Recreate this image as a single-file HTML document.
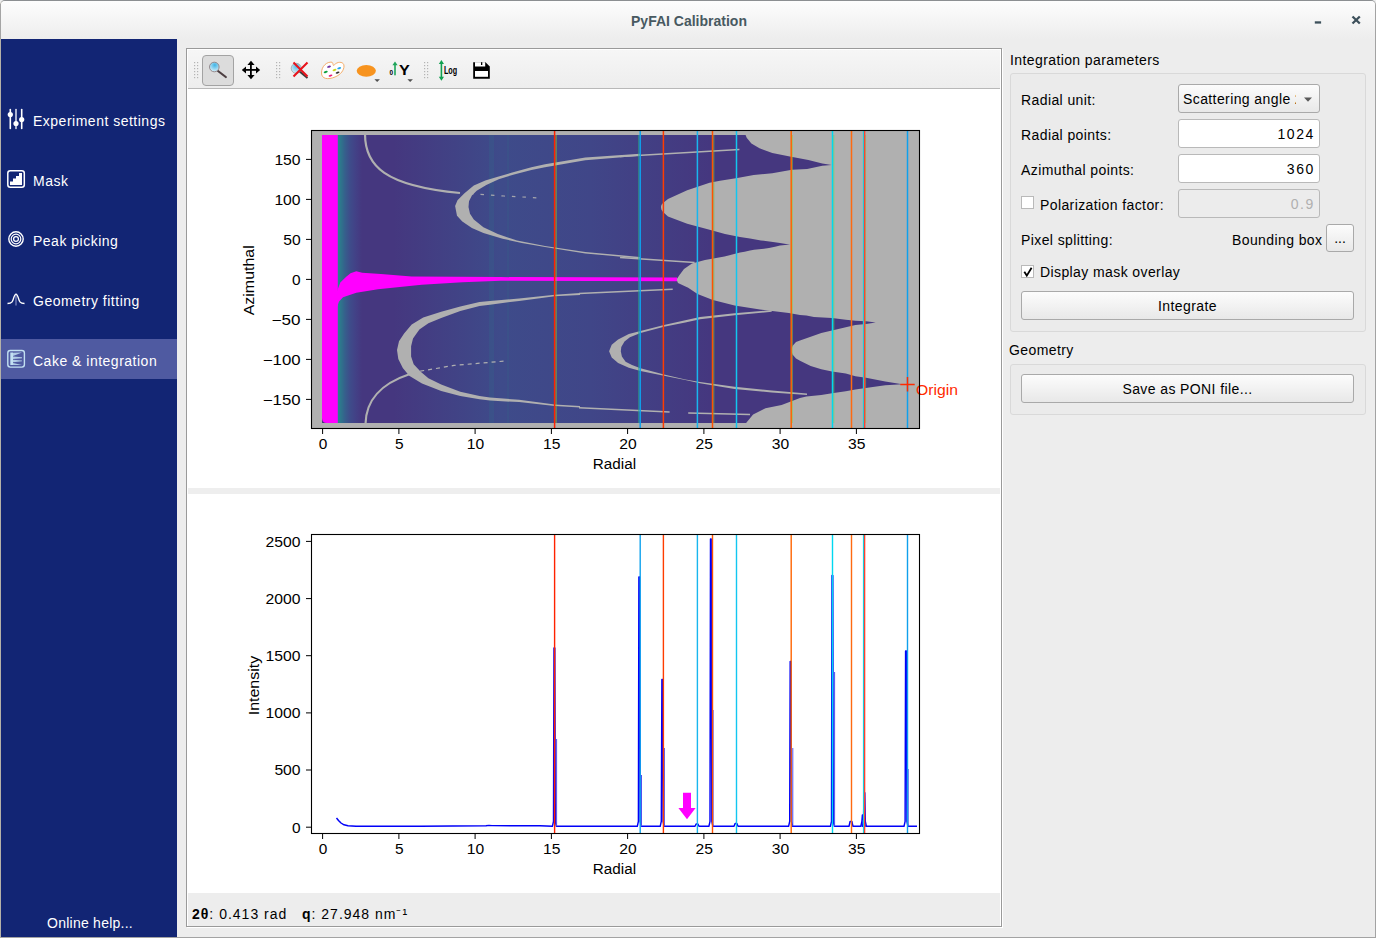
<!DOCTYPE html>
<html><head><meta charset="utf-8">
<style>
*{box-sizing:border-box}
html,body{margin:0;padding:0}
body{width:1376px;height:938px;overflow:hidden;position:relative;background:#ededed;font-family:"Liberation Sans",sans-serif;color:#000}
.abs{position:absolute}
#win{position:absolute;left:0;top:0;width:1376px;height:938px;border:1px solid #a3a3a3;border-top-color:#8c8f92;border-left-color:#b4b1a8;border-radius:5px 5px 0 0;background:#ededed}
#title{position:absolute;left:1px;top:1px;width:1374px;height:38px;background:linear-gradient(#fdfdfd,#ededed);border-radius:4px 4px 0 0}
#titletxt{position:absolute;left:0;width:1376px;top:12px;text-align:center;font-weight:bold;font-size:14px;color:#485961}
#side{position:absolute;left:1px;top:39px;width:176px;height:898px;background:#122574;color:#fff;font-size:14px}
.item{position:absolute;left:0;width:176px;height:40px}
.t{white-space:nowrap;letter-spacing:0.5px}
.item .t{position:absolute;left:34px;top:11px;white-space:nowrap}
.sel{background:#4f5aa1}
#frame{position:absolute;left:186px;top:48px;width:816px;height:879px;border:1px solid #9a9a9a;background:#fff;box-shadow:1px 1px 0 #fff}
#toolbar{position:absolute;left:188px;top:50px;width:812px;height:39px;background:linear-gradient(#f6f6f6,#ededed);border-bottom:1px solid #b8b8b8}
#split{position:absolute;left:188px;top:488px;width:812px;height:6px;background:#eeeeee}
#status{position:absolute;left:188px;top:893px;width:812px;height:33px;background:#ededed;font-size:14px}
.lbl{position:absolute;font-size:14px;white-space:nowrap;letter-spacing:0.4px}
.num{letter-spacing:1.6px}
.field{position:absolute;background:#fff;border:1px solid #b9b9b9;border-radius:3px}
.btn{position:absolute;letter-spacing:0.4px;background:linear-gradient(#fcfcfc,#e8e8e8);border:1px solid #a9a9a9;border-radius:3px;font-size:14px;text-align:center}
.grp{position:absolute;border:1px solid #d9d9d9;border-radius:3px;background:#ebebeb}
svg text{font-family:"Liberation Sans",sans-serif}
</style></head><body>
<div id="win"></div>
<div class="abs" style="left:0;top:4px;width:1px;height:35px;background:#a4a4a4;z-index:2"></div>
<div id="title"><div id="titletxt">PyFAI Calibration</div></div>
<svg class="abs" style="left:1300px;top:8px" width="70" height="24" viewBox="1300 8 70 24">
  <rect x="1314.8" y="21.3" width="6.3" height="2.3" fill="#3d505b"/>
  <path d="M1352.5,16.5 L1359.8,23.5 M1359.8,16.5 L1352.5,23.5" stroke="#3d505b" stroke-width="2.3"/>
</svg>

<div id="side">
  <div class="item sel" style="top:300px;height:40px"></div>
  <div class="t abs" style="left:32px;top:74px">Experiment settings</div>
  <div class="t abs" style="left:32px;top:134px">Mask</div>
  <div class="t abs" style="left:32px;top:194px">Peak picking</div>
  <div class="t abs" style="left:32px;top:254px">Geometry fitting</div>
  <div class="t abs" style="left:32px;top:314px">Cake &amp; integration</div>
  <div class="t abs" style="left:46px;top:876px;letter-spacing:0.25px">Online help...</div>
</div>
<svg class="abs" style="left:0;top:0" width="180" height="400" viewBox="0 0 180 400">
  <g stroke="#fff" stroke-width="1.6" stroke-linecap="round">
    <line x1="10.3" y1="109.5" x2="10.3" y2="128.5"/><line x1="16" y1="109.5" x2="16" y2="128.5" stroke="#d4d8ea"/><line x1="21.7" y1="109.5" x2="21.7" y2="128.5"/>
  </g>
  <g fill="#fff"><circle cx="10.3" cy="114.6" r="2.6"/><circle cx="16" cy="123.5" r="2.6"/><circle cx="21.7" cy="119.6" r="2.6"/></g>
  <rect x="7.8" y="170.7" width="16.5" height="16.6" rx="2.5" fill="none" stroke="#fff" stroke-width="1.5"/>
  <path d="M10,185 V181.5 H13 V178.6 H16 V175.9 H19 V173 H22 V185 Z" fill="#fff"/>
  <g fill="none" stroke="#fff"><circle cx="16" cy="239" r="7.2" stroke-width="1.4"/><circle cx="16" cy="239" r="4.8" stroke-width="1.2"/><circle cx="16" cy="239" r="2.4" stroke-width="1.3"/></g>
  <line x1="16" y1="293" x2="16" y2="305.5" stroke="#7a84bd" stroke-width="1.3"/>
  <path d="M7.5,303.5 C12,303.5 12.5,302 14,297 C15,293.5 17,293.5 18,297 C19.5,302 20,303.5 24.5,303.5" fill="none" stroke="#fff" stroke-width="1.3"/>
  <rect x="7.8" y="350.5" width="16.6" height="16.6" rx="2.5" fill="none" stroke="#c2e0f2" stroke-width="1.4"/>
  <path d="M10.3,352.5 H13 V365 H10.3 Z" fill="#c2e0f2"/>
  <path d="M13,352.8 L22,352.5 L13,356 Z M13,356.5 L22,357.2 L22,358.2 L13,359 Z M13,359.8 L22,360.5 L22,361.3 L13,362.2 Z M13,363 L22,365 L13,365 Z" fill="#c2e0f2" opacity="0.85"/>
</svg>
<div id="frame"></div>
<div id="toolbar"></div>
<svg class="abs" style="left:186px;top:48px" width="320" height="42" viewBox="186 48 320 42">
  <g fill="#b4b4b4">
    <rect x="194" y="62" width="1.2" height="1.2"/><rect x="197" y="62" width="1.2" height="1.2"/><rect x="194" y="65" width="1.2" height="1.2"/><rect x="197" y="65" width="1.2" height="1.2"/><rect x="194" y="68" width="1.2" height="1.2"/><rect x="197" y="68" width="1.2" height="1.2"/><rect x="194" y="71" width="1.2" height="1.2"/><rect x="197" y="71" width="1.2" height="1.2"/><rect x="194" y="74" width="1.2" height="1.2"/><rect x="197" y="74" width="1.2" height="1.2"/><rect x="194" y="77" width="1.2" height="1.2"/><rect x="197" y="77" width="1.2" height="1.2"/>
    <rect x="276" y="62" width="1.2" height="1.2"/><rect x="279" y="62" width="1.2" height="1.2"/><rect x="276" y="65" width="1.2" height="1.2"/><rect x="279" y="65" width="1.2" height="1.2"/><rect x="276" y="68" width="1.2" height="1.2"/><rect x="279" y="68" width="1.2" height="1.2"/><rect x="276" y="71" width="1.2" height="1.2"/><rect x="279" y="71" width="1.2" height="1.2"/><rect x="276" y="74" width="1.2" height="1.2"/><rect x="279" y="74" width="1.2" height="1.2"/><rect x="276" y="77" width="1.2" height="1.2"/><rect x="279" y="77" width="1.2" height="1.2"/>
    <rect x="424" y="62" width="1.2" height="1.2"/><rect x="427" y="62" width="1.2" height="1.2"/><rect x="424" y="65" width="1.2" height="1.2"/><rect x="427" y="65" width="1.2" height="1.2"/><rect x="424" y="68" width="1.2" height="1.2"/><rect x="427" y="68" width="1.2" height="1.2"/><rect x="424" y="71" width="1.2" height="1.2"/><rect x="427" y="71" width="1.2" height="1.2"/><rect x="424" y="74" width="1.2" height="1.2"/><rect x="427" y="74" width="1.2" height="1.2"/><rect x="424" y="77" width="1.2" height="1.2"/><rect x="427" y="77" width="1.2" height="1.2"/>
  </g>
  <defs><radialGradient id="lens" cx="0.55" cy="0.3" r="0.8"><stop offset="0" stop-color="#3fb4e6"/><stop offset="1" stop-color="#eef8fc"/></radialGradient></defs>
  <rect x="202.5" y="55.5" width="31" height="30" rx="3.5" fill="#dcdcdc" stroke="#a3a3a3"/>
  <line x1="218" y1="71" x2="225.8" y2="77" stroke="#4d3f42" stroke-width="2.2" stroke-linecap="round"/>
  <circle cx="214.3" cy="67" r="4.8" fill="url(#lens)" stroke="#8d7f82" stroke-width="0.9"/>
  <g fill="#000"><rect x="250" y="63" width="1.8" height="14"/><rect x="244" y="69" width="14" height="1.8"/>
    <path d="M251,60.8 L254.6,65 H247.4 Z M251,79.2 L254.6,75 H247.4 Z M241.8,70 L246,66.4 V73.6 Z M260.2,70 L256,66.4 V73.6 Z"/></g>
  <line x1="299" y1="71" x2="307.5" y2="78" stroke="#3c3c3c" stroke-width="2"/>
  <circle cx="296.2" cy="68.3" r="5" fill="url(#lens)" stroke="#999" stroke-width="0.8" opacity="0.9"/>
  <path d="M293.5,62.5 L307.5,76.5 M307.5,62.5 L293.5,76.5" stroke="#e8141c" stroke-width="2.1"/>
  <path d="M332,62.2 C327,61.5 321.5,66 321.5,73 C321.5,79 328,80 335,77 C341,74.5 344,70 344,66 C344,62 339,61.2 335.5,63.8 C334.5,64.6 333.8,65.6 333.4,65.4 C333,64.5 332.8,62.5 332,62.2 Z" fill="#fff" stroke="#f3a55a" stroke-width="0.9"/>
  <g><ellipse cx="329" cy="66.7" rx="2" ry="1" fill="#7030a0" transform="rotate(-15 329 66.7)"/><ellipse cx="339.2" cy="68.2" rx="2" ry="1" fill="#20a8e8" transform="rotate(-15 339.2 68.2)"/><ellipse cx="334.5" cy="70" rx="2" ry="1" fill="#c8d820" transform="rotate(-15 334.5 70)"/><ellipse cx="325.7" cy="72" rx="2.1" ry="1" fill="#10a040" transform="rotate(-15 325.7 72)"/><ellipse cx="337.6" cy="72.6" rx="2" ry="1" fill="#303030" transform="rotate(-15 337.6 72.6)"/><ellipse cx="330.5" cy="75.6" rx="2" ry="1" fill="#e8187a" transform="rotate(-15 330.5 75.6)"/></g>
  <ellipse cx="366.3" cy="70.8" rx="9.6" ry="5.9" fill="#f7931e"/>
  <path d="M374.4,79.3 H379.9 L377.15,82 Z M407.4,79.3 H412.9 L410.15,82 Z" fill="#505050"/>
  <text x="389.6" y="75.3" font-size="6.5" font-weight="bold" fill="#000">0</text>
  <rect x="394.2" y="64.5" width="1.6" height="10.8" fill="#1fa55a"/><path d="M395,61.5 L397.6,65.2 H392.4 Z" fill="#1fa55a"/>
  <text x="398.9" y="75.4" font-size="15.2" font-weight="bold" fill="#000" textLength="10.8" lengthAdjust="spacingAndGlyphs">Y</text>
  <rect x="440.6" y="63" width="1.6" height="15" fill="#12a050"/><path d="M441.4,60 L444,64 H438.8 Z M441.4,80.8 L444,76.8 H438.8 Z" fill="#12a050"/>
  <text x="443.9" y="74.1" font-size="10.6" font-weight="bold" fill="#000" textLength="13.2" lengthAdjust="spacingAndGlyphs">Log</text>
  <path d="M473.2,62.2 H485.5 L489.8,66.5 V78.7 H473.2 Z" fill="#000"/>
  <rect x="475" y="71" width="13" height="5.8" fill="#fff"/>
  <rect x="475" y="62.2" width="10.2" height="4.3" fill="#fff"/><rect x="481" y="62.2" width="1.3" height="2.8" fill="#000"/>
</svg>
<div id="split"></div>
<div id="status"><div class="lbl" style="left:4px;top:11px;letter-spacing:1px"><b>2θ</b>: 0.413 rad&nbsp;&nbsp; <b>q</b>: 27.948 nm⁻¹</div></div>

<!-- right panel -->
<div class="lbl" style="left:1010px;top:52px">Integration parameters</div>
<div class="grp" style="left:1010px;top:73px;width:356px;height:259px"></div>
<div class="lbl" style="left:1021px;top:92px">Radial unit:</div>
<div class="btn" style="left:1178px;top:84px;width:142px;height:29px;text-align:left"><div class="lbl" style="left:4px;top:6px;width:113px;overflow:hidden">Scattering angle 2θ</div><svg class="abs" style="left:124px;top:12px" width="10" height="6"><path d="M1,0.5 H9 L5,4.8 Z" fill="#5a5a5a"/></svg></div>
<div class="lbl" style="left:1021px;top:127px">Radial points:</div>
<div class="field" style="left:1178px;top:119px;width:142px;height:29px"><div class="lbl num" style="right:4px;top:6px">1024</div></div>
<div class="lbl" style="left:1021px;top:162px">Azimuthal points:</div>
<div class="field" style="left:1178px;top:154px;width:142px;height:29px"><div class="lbl num" style="right:4px;top:6px">360</div></div>
<div class="field" style="left:1021px;top:196px;width:13px;height:13px;border-radius:0"></div>
<div class="lbl" style="left:1040px;top:197px">Polarization factor:</div>
<div class="field" style="left:1178px;top:189px;width:142px;height:29px;background:#ececec"><div class="lbl num" style="right:4px;top:6px;color:#b0b0b0">0.9</div></div>
<div class="lbl" style="left:1021px;top:232px">Pixel splitting:</div>
<div class="lbl" style="left:1232px;top:232px">Bounding box</div>
<div class="btn" style="left:1326px;top:224px;width:28px;height:28px;padding-top:5px;letter-spacing:0">...</div>
<div class="field" style="left:1021px;top:265px;width:13px;height:13px;border-radius:0"><svg class="abs" style="left:0;top:0" width="12" height="12"><path d="M2.3,5.8 L4.8,9.6 L9.6,1.8" fill="none" stroke="#000" stroke-width="1.8"/></svg></div>
<div class="lbl" style="left:1040px;top:264px">Display mask overlay</div>
<div class="btn" style="left:1021px;top:291px;width:333px;height:29px;padding-top:6px">Integrate</div>
<div class="lbl" style="left:1009px;top:342px">Geometry</div>
<div class="grp" style="left:1010px;top:364px;width:356px;height:51px"></div>
<div class="btn" style="left:1021px;top:374px;width:333px;height:29px;padding-top:6px">Save as PONI file...</div>

<svg class="abs" style="left:0;top:0" width="1376" height="938" viewBox="0 0 1376 938">
<defs><linearGradient id="teal" gradientUnits="userSpaceOnUse" x1="337" x2="362" y1="0" y2="0"><stop offset="0" stop-color="#21908c"/><stop offset="0.12" stop-color="#2c7a8c"/><stop offset="0.32" stop-color="#365f8c"/><stop offset="0.52" stop-color="#3e4c8a"/><stop offset="0.72" stop-color="#424287"/><stop offset="1" stop-color="#45377f"/></linearGradient><linearGradient id="blue" gradientUnits="userSpaceOnUse" x1="322" x2="919" y1="0" y2="0"><stop offset="0" stop-color="#45377f"/><stop offset="0.12" stop-color="#45377f"/><stop offset="0.3" stop-color="#3e4b8a"/><stop offset="0.45" stop-color="#404688"/><stop offset="0.65" stop-color="#45377f"/><stop offset="1" stop-color="#45377f"/></linearGradient><clipPath id="cakeclip"><rect x="312" y="131" width="607" height="297"/></clipPath></defs>
<rect x="311" y="130" width="609" height="299" fill="#b0b0b0"/>
<g clip-path="url(#cakeclip)">
<polygon points="322.0,135.0 745.6,135.0 746.7,137.8 751.4,143.6 759.5,148.3 772.3,152.9 789.8,156.4 808.4,159.9 822.3,163.4 831.6,165.1 822.3,165.8 807.2,169.0 792.0,169.8 772.3,173.3 753.7,175.0 737.4,177.9 720.0,180.8 709.6,182.8 687.2,190.2 668.0,199.1 663.0,203.0 661.4,205.0 661.0,207.0 661.4,209.5 663.0,212.0 668.0,216.6 687.2,223.8 709.6,229.8 725.0,234.0 740.0,236.9 750.0,238.4 761.0,240.4 773.0,241.9 780.0,243.0 786.0,243.9 790.0,244.5 780.0,245.6 775.0,246.8 769.0,248.0 764.0,248.8 754.0,249.7 750.0,250.6 744.6,251.7 740.0,252.6 724.5,256.5 705.0,260.0 692.0,263.5 684.0,269.0 679.5,275.0 676.5,279.5 678.0,283.0 688.2,287.7 697.5,293.9 712.9,300.1 734.6,305.5 760.0,309.4 788.8,313.0 800.0,314.9 806.4,315.5 813.9,317.1 832.0,318.1 845.8,319.7 855.4,320.8 866.1,321.3 875.7,322.4 866.1,324.0 855.4,325.0 845.8,327.2 832.0,330.4 821.3,333.0 810.7,336.8 800.0,340.5 796.0,342.0 792.5,346.0 791.3,350.4 792.5,354.5 796.0,358.5 800.0,360.8 810.7,366.1 821.3,369.3 832.0,371.4 845.8,373.6 855.4,376.2 866.1,377.8 885.3,381.6 902.3,384.2 885.3,385.3 869.3,387.4 855.4,389.6 845.8,391.2 832.0,393.3 821.3,394.9 806.4,396.5 800.0,398.1 781.6,405.1 765.5,408.3 753.1,414.5 746.1,423.0 322.0,423.0" fill="url(#blue)" />
<rect x="337" y="135" width="25" height="288" fill="url(#teal)"/>
<rect x="489" y="135" width="5" height="288" fill="#2a8a8e" opacity="0.13"/>
<rect x="507" y="135" width="2" height="288" fill="#2a8a8e" opacity="0.1"/>
<path d="M365,134 C365,166 385,186 460,193" fill="none" stroke="#b0b0b0" stroke-width="2.2"/>
<polyline points="470.0,193.6 504.0,196.0 540.0,198.0" fill="none" stroke="#b0b0b0" stroke-width="1.2" stroke-dasharray="3.5,7" opacity="0.9"/>
<path d="M365.5,424 C366,400 380,384 410,374" fill="none" stroke="#b0b0b0" stroke-width="2.2"/>
<polyline points="420.2,371.2 454.0,365.4 483.4,362.9 505.0,361.0" fill="none" stroke="#b0b0b0" stroke-width="1.2" stroke-dasharray="4,4"/>
<polygon points="640.0,153.8 585.3,157.4 545.0,164.3 531.4,167.2 512.2,172.5 497.8,176.8 485.3,180.6 473.8,185.4 464.2,193.6 457.5,200.3 455.1,206.1 457.0,215.7 462.3,221.4 471.9,228.1 483.4,232.9 502.6,238.7 521.8,243.0 545.0,246.9 585.3,253.4 640.0,258.5 640.0,257.0 585.3,251.9 545.0,245.9 517.0,240.6 497.8,233.9 483.4,227.2 473.8,219.5 470.0,213.7 468.5,207.0 469.0,201.3 471.9,195.5 476.7,190.7 486.3,185.0 498.7,179.2 514.1,174.4 531.4,170.1 545.0,167.2 585.3,160.3 640.0,155.7" fill="#b0b0b0" />
<polyline points="620.0,156.6 739.4,149.5" fill="none" stroke="#b0b0b0" stroke-width="1.5" />
<polyline points="620.0,257.4 694.6,262.6" fill="none" stroke="#b0b0b0" stroke-width="1.5" />
<polygon points="580.0,293.1 554.7,294.7 519.1,298.5 490.0,300.9 479.5,302.1 460.3,306.6 441.2,311.7 423.2,317.5 411.7,324.5 404.1,333.5 399.0,341.2 397.0,350.1 398.3,359.1 402.8,368.0 409.2,375.7 422.0,383.4 441.2,391.0 460.3,396.1 479.5,399.3 490.0,400.6 519.1,402.1 554.7,406.0 580.0,407.5 580.0,406.0 554.7,404.4 519.1,399.8 490.0,397.4 479.5,396.1 460.3,391.7 441.2,384.6 428.4,378.2 420.7,371.8 413.7,364.2 411.1,356.5 411.1,346.3 413.0,338.6 419.4,329.6 428.4,323.2 441.2,318.1 460.3,311.1 479.5,306.0 490.0,304.7 519.1,300.9 554.7,296.2 580.0,295.1" fill="#b0b0b0" />
<polyline points="579.0,293.5 672.7,289.3" fill="none" stroke="#b0b0b0" stroke-width="1.5" />
<polyline points="579.0,407.8 669.6,412.1" fill="none" stroke="#b0b0b0" stroke-width="1.5" />
<polyline points="688.2,412.9 750.0,414.5" fill="none" stroke="#b0b0b0" stroke-width="1.5" />
<polygon points="771.7,310.1 734.6,313.2 700.0,317.0 685.3,320.3 664.0,325.0 640.5,330.9 628.8,334.1 618.1,339.4 611.7,344.8 609.1,351.2 611.7,357.6 618.1,362.9 628.8,367.7 640.5,370.9 664.0,375.7 685.3,380.0 700.0,383.2 734.6,389.0 771.7,392.5 807.0,395.0 807.0,393.4 771.7,390.4 734.6,386.8 700.0,381.9 685.3,379.4 664.0,374.6 640.5,368.2 632.0,365.0 625.6,361.8 621.9,356.5 620.8,351.2 621.3,346.9 624.5,341.6 629.9,337.3 640.5,333.0 664.0,326.7 685.3,322.4 700.0,319.2 734.6,315.2 771.7,311.8" fill="#b0b0b0" />
<path d="M322,135 H337.8 V423 H327 Q322,423 322,418 Z" fill="#ff00ff"/>
<polygon points="337.0,291.3 340.3,282.6 346.2,276.8 350.5,273.2 356.3,271.3 362.2,272.7 381.0,273.9 411.6,276.5 500.2,277.1 677.0,277.6 677.0,281.2 500.6,280.8 462.4,282.3 421.7,284.8 378.0,289.2 356.3,292.8 343.0,297.2 339.0,301.5 337.0,307.3" fill="#ff00ff" />
<rect x="555.5" y="135" width="1" height="288" fill="#9ad02a" opacity="0.8"/>
<rect x="638.3" y="135" width="1" height="288" fill="#27a88a" opacity="0.8"/>
<rect x="713.3" y="135" width="1" height="288" fill="#6cc24a" opacity="0.7"/>
<rect x="791.8" y="135" width="1" height="288" fill="#8ccc3a" opacity="0.6"/>
<rect x="833.3" y="135" width="1" height="288" fill="#6ad64a" opacity="0.6"/>
<rect x="865.1" y="135" width="1" height="288" fill="#6ad64a" opacity="0.5"/>
</g>
<line x1="554.6" y1="131" x2="554.6" y2="428" stroke="#ff2200" stroke-width="1.5"/>
<line x1="640.2" y1="131" x2="640.2" y2="428" stroke="#0ea2ee" stroke-width="1.5"/>
<line x1="663.4" y1="131" x2="663.4" y2="428" stroke="#ff3c00" stroke-width="1.5"/>
<line x1="697.4" y1="131" x2="697.4" y2="428" stroke="#19b6ee" stroke-width="1.5"/>
<line x1="712.5" y1="131" x2="712.5" y2="428" stroke="#ff5200" stroke-width="1.5"/>
<line x1="736.5" y1="131" x2="736.5" y2="428" stroke="#12c6f0" stroke-width="1.5"/>
<line x1="791.2" y1="131" x2="791.2" y2="428" stroke="#ff6400" stroke-width="1.5"/>
<line x1="832.5" y1="131" x2="832.5" y2="428" stroke="#00d8f0" stroke-width="1.5"/>
<line x1="851.5" y1="131" x2="851.5" y2="428" stroke="#ff6a10" stroke-width="1.5"/>
<line x1="863.6" y1="131" x2="863.6" y2="428" stroke="#00e0f0" stroke-width="1.5"/>
<line x1="864.6" y1="131" x2="864.6" y2="428" stroke="#ff4030" stroke-width="1.5"/>
<line x1="907.5" y1="131" x2="907.5" y2="428" stroke="#10a0ec" stroke-width="1.5"/>
<path d="M900.3,384.4 H914.7 M907.5,377 V391.6" stroke="#ff2a00" stroke-width="1.5"/>
<text x="916" y="395" font-size="14" fill="#ff2a00" textLength="42" lengthAdjust="spacingAndGlyphs">Origin</text>
<rect x="311.5" y="130.5" width="608" height="298" fill="none" stroke="#000" stroke-width="1.1"/>
<line x1="322.6" y1="429" x2="322.6" y2="434" stroke="#000" stroke-width="1"/>
<text x="318.7" y="449.0" font-size="14" textLength="8.6" lengthAdjust="spacingAndGlyphs">0</text>
<line x1="398.9" y1="429" x2="398.9" y2="434" stroke="#000" stroke-width="1"/>
<text x="394.9" y="449.0" font-size="14" textLength="8.6" lengthAdjust="spacingAndGlyphs">5</text>
<line x1="475.1" y1="429" x2="475.1" y2="434" stroke="#000" stroke-width="1"/>
<text x="466.8" y="449.0" font-size="14" textLength="17.4" lengthAdjust="spacingAndGlyphs">10</text>
<line x1="551.4" y1="429" x2="551.4" y2="434" stroke="#000" stroke-width="1"/>
<text x="543.0" y="449.0" font-size="14" textLength="17.4" lengthAdjust="spacingAndGlyphs">15</text>
<line x1="627.6" y1="429" x2="627.6" y2="434" stroke="#000" stroke-width="1"/>
<text x="619.3" y="449.0" font-size="14" textLength="17.4" lengthAdjust="spacingAndGlyphs">20</text>
<line x1="703.9" y1="429" x2="703.9" y2="434" stroke="#000" stroke-width="1"/>
<text x="695.5" y="449.0" font-size="14" textLength="17.4" lengthAdjust="spacingAndGlyphs">25</text>
<line x1="780.1" y1="429" x2="780.1" y2="434" stroke="#000" stroke-width="1"/>
<text x="771.8" y="449.0" font-size="14" textLength="17.4" lengthAdjust="spacingAndGlyphs">30</text>
<line x1="856.4" y1="429" x2="856.4" y2="434" stroke="#000" stroke-width="1"/>
<text x="848.0" y="449.0" font-size="14" textLength="17.4" lengthAdjust="spacingAndGlyphs">35</text>
<line x1="306" y1="159.4" x2="311" y2="159.4" stroke="#000" stroke-width="1"/>
<text x="274.4" y="165.0" font-size="14" textLength="26.2" lengthAdjust="spacingAndGlyphs">150</text>
<line x1="306" y1="199.4" x2="311" y2="199.4" stroke="#000" stroke-width="1"/>
<text x="274.4" y="205.0" font-size="14" textLength="26.2" lengthAdjust="spacingAndGlyphs">100</text>
<line x1="306" y1="239.4" x2="311" y2="239.4" stroke="#000" stroke-width="1"/>
<text x="283.2" y="245.0" font-size="14" textLength="17.4" lengthAdjust="spacingAndGlyphs">50</text>
<line x1="306" y1="279.4" x2="311" y2="279.4" stroke="#000" stroke-width="1"/>
<text x="292.0" y="285.0" font-size="14" textLength="8.6" lengthAdjust="spacingAndGlyphs">0</text>
<line x1="306" y1="319.4" x2="311" y2="319.4" stroke="#000" stroke-width="1"/>
<text x="271.6" y="325.0" font-size="14" textLength="29.0" lengthAdjust="spacingAndGlyphs">−50</text>
<line x1="306" y1="359.4" x2="311" y2="359.4" stroke="#000" stroke-width="1"/>
<text x="262.8" y="365.0" font-size="14" textLength="37.8" lengthAdjust="spacingAndGlyphs">−100</text>
<line x1="306" y1="399.4" x2="311" y2="399.4" stroke="#000" stroke-width="1"/>
<text x="262.8" y="405.0" font-size="14" textLength="37.8" lengthAdjust="spacingAndGlyphs">−150</text>
<text x="592.8" y="469" font-size="14" textLength="43.3" lengthAdjust="spacingAndGlyphs">Radial</text>
<text transform="translate(253.5,280.3) rotate(-90)" x="-35" font-size="14" textLength="70" lengthAdjust="spacingAndGlyphs">Azimuthal</text>
<polyline points="336.5,818.0 338.5,820.5 341.0,823.0 344.0,824.8 348.0,825.7 356.0,826.3 420.0,826.3 486.0,825.8 489.0,825.4 492.0,825.6 510.0,825.7 540.0,825.8 552.4,826.3 553.5,821.3 554.0,648.0 554.8,648.0 555.3,821.3 556.4,826.3 637.3,826.3 638.4,821.3 638.9,577.0 639.6,577.0 640.2,821.3 641.3,826.3 660.2,826.3 661.3,821.3 661.9,679.4 662.6,679.4 663.1,821.3 664.2,826.3 695.0,826.3 696.1,824.0 696.6,824.0 697.4,824.0 697.9,824.0 699.0,826.3 708.9,826.3 710.0,821.3 710.5,539.0 711.2,539.0 711.8,821.3 712.9,826.3 734.0,826.3 735.1,823.5 735.6,823.5 736.4,823.5 736.9,823.5 738.0,826.3 788.6,826.3 789.7,821.3 790.2,661.5 791.0,661.5 791.5,821.3 792.6,826.3 830.4,826.3 831.5,821.3 832.0,575.5 832.8,575.5 833.3,821.3 834.4,826.3 849.0,826.3 850.1,821.5 850.6,821.5 851.4,821.5 851.9,821.5 853.0,826.3 860.8,826.3 861.9,821.3 862.4,815.0 863.1,815.0 863.7,821.3 864.8,826.3 862.4,826.3 863.5,821.3 864.0,792.8 864.8,792.8 865.3,821.3 866.4,826.3 904.0,826.3 905.1,821.3 905.6,651.0 906.4,651.0 906.9,821.3 908.0,826.3 917.0,826.3" fill="none" stroke="#0000f8" stroke-width="1.45" stroke-linejoin="round"/>
<line x1="556.6" y1="826.3" x2="556.6" y2="739" stroke="#5050f0" stroke-width="1"/>
<line x1="641.5" y1="826.3" x2="641.5" y2="775" stroke="#5050f0" stroke-width="1"/>
<line x1="664.4000000000001" y1="826.3" x2="664.4000000000001" y2="748" stroke="#5050f0" stroke-width="1"/>
<line x1="713.1" y1="826.3" x2="713.1" y2="710" stroke="#5050f0" stroke-width="1"/>
<line x1="792.8000000000001" y1="826.3" x2="792.8000000000001" y2="748" stroke="#5050f0" stroke-width="1"/>
<line x1="834.6" y1="826.3" x2="834.6" y2="672" stroke="#5050f0" stroke-width="1"/>
<line x1="908.2" y1="826.3" x2="908.2" y2="769" stroke="#5050f0" stroke-width="1"/>
<line x1="554.6" y1="535" x2="554.6" y2="833" stroke="#ff2200" stroke-width="1.4"/>
<line x1="640.2" y1="535" x2="640.2" y2="833" stroke="#0ea2ee" stroke-width="1.4"/>
<line x1="663.4" y1="535" x2="663.4" y2="833" stroke="#ff3c00" stroke-width="1.4"/>
<line x1="697.4" y1="535" x2="697.4" y2="833" stroke="#19b6ee" stroke-width="1.4"/>
<line x1="712.5" y1="535" x2="712.5" y2="833" stroke="#ff5200" stroke-width="1.4"/>
<line x1="736.5" y1="535" x2="736.5" y2="833" stroke="#12c6f0" stroke-width="1.4"/>
<line x1="791.2" y1="535" x2="791.2" y2="833" stroke="#ff6400" stroke-width="1.4"/>
<line x1="832.5" y1="535" x2="832.5" y2="833" stroke="#00d8f0" stroke-width="1.4"/>
<line x1="851.5" y1="535" x2="851.5" y2="833" stroke="#ff6a10" stroke-width="1.4"/>
<line x1="863.6" y1="535" x2="863.6" y2="833" stroke="#00e0f0" stroke-width="1.4"/>
<line x1="864.6" y1="535" x2="864.6" y2="833" stroke="#ff4030" stroke-width="1.4"/>
<line x1="907.5" y1="535" x2="907.5" y2="833" stroke="#10a0ec" stroke-width="1.4"/>
<path d="M683,792.8 H691 V808 H695.6 L687,819.3 L678.4,808 H683 Z" fill="#ff00ff"/>
<rect x="311.5" y="534.5" width="608" height="299" fill="none" stroke="#000" stroke-width="1.1"/>
<line x1="322.6" y1="834" x2="322.6" y2="839" stroke="#000" stroke-width="1"/>
<text x="318.7" y="854.0" font-size="14" textLength="8.6" lengthAdjust="spacingAndGlyphs">0</text>
<line x1="398.9" y1="834" x2="398.9" y2="839" stroke="#000" stroke-width="1"/>
<text x="394.9" y="854.0" font-size="14" textLength="8.6" lengthAdjust="spacingAndGlyphs">5</text>
<line x1="475.1" y1="834" x2="475.1" y2="839" stroke="#000" stroke-width="1"/>
<text x="466.8" y="854.0" font-size="14" textLength="17.4" lengthAdjust="spacingAndGlyphs">10</text>
<line x1="551.4" y1="834" x2="551.4" y2="839" stroke="#000" stroke-width="1"/>
<text x="543.0" y="854.0" font-size="14" textLength="17.4" lengthAdjust="spacingAndGlyphs">15</text>
<line x1="627.6" y1="834" x2="627.6" y2="839" stroke="#000" stroke-width="1"/>
<text x="619.3" y="854.0" font-size="14" textLength="17.4" lengthAdjust="spacingAndGlyphs">20</text>
<line x1="703.9" y1="834" x2="703.9" y2="839" stroke="#000" stroke-width="1"/>
<text x="695.5" y="854.0" font-size="14" textLength="17.4" lengthAdjust="spacingAndGlyphs">25</text>
<line x1="780.1" y1="834" x2="780.1" y2="839" stroke="#000" stroke-width="1"/>
<text x="771.8" y="854.0" font-size="14" textLength="17.4" lengthAdjust="spacingAndGlyphs">30</text>
<line x1="856.4" y1="834" x2="856.4" y2="839" stroke="#000" stroke-width="1"/>
<text x="848.0" y="854.0" font-size="14" textLength="17.4" lengthAdjust="spacingAndGlyphs">35</text>
<line x1="306" y1="827.2" x2="311" y2="827.2" stroke="#000" stroke-width="1"/>
<text x="292.0" y="832.5" font-size="14" textLength="8.6" lengthAdjust="spacingAndGlyphs">0</text>
<line x1="306" y1="770.0" x2="311" y2="770.0" stroke="#000" stroke-width="1"/>
<text x="274.4" y="775.3" font-size="14" textLength="26.2" lengthAdjust="spacingAndGlyphs">500</text>
<line x1="306" y1="712.9" x2="311" y2="712.9" stroke="#000" stroke-width="1"/>
<text x="265.6" y="718.2" font-size="14" textLength="35.0" lengthAdjust="spacingAndGlyphs">1000</text>
<line x1="306" y1="655.7" x2="311" y2="655.7" stroke="#000" stroke-width="1"/>
<text x="265.6" y="661.0" font-size="14" textLength="35.0" lengthAdjust="spacingAndGlyphs">1500</text>
<line x1="306" y1="598.6" x2="311" y2="598.6" stroke="#000" stroke-width="1"/>
<text x="265.6" y="603.9" font-size="14" textLength="35.0" lengthAdjust="spacingAndGlyphs">2000</text>
<line x1="306" y1="541.4" x2="311" y2="541.4" stroke="#000" stroke-width="1"/>
<text x="265.6" y="546.7" font-size="14" textLength="35.0" lengthAdjust="spacingAndGlyphs">2500</text>
<text x="592.8" y="873.5" font-size="14" textLength="43.3" lengthAdjust="spacingAndGlyphs">Radial</text>
<text transform="translate(258.8,685.8) rotate(-90)" x="-29.5" font-size="14" textLength="59.5" lengthAdjust="spacingAndGlyphs">Intensity</text>
</svg>
</body></html>
